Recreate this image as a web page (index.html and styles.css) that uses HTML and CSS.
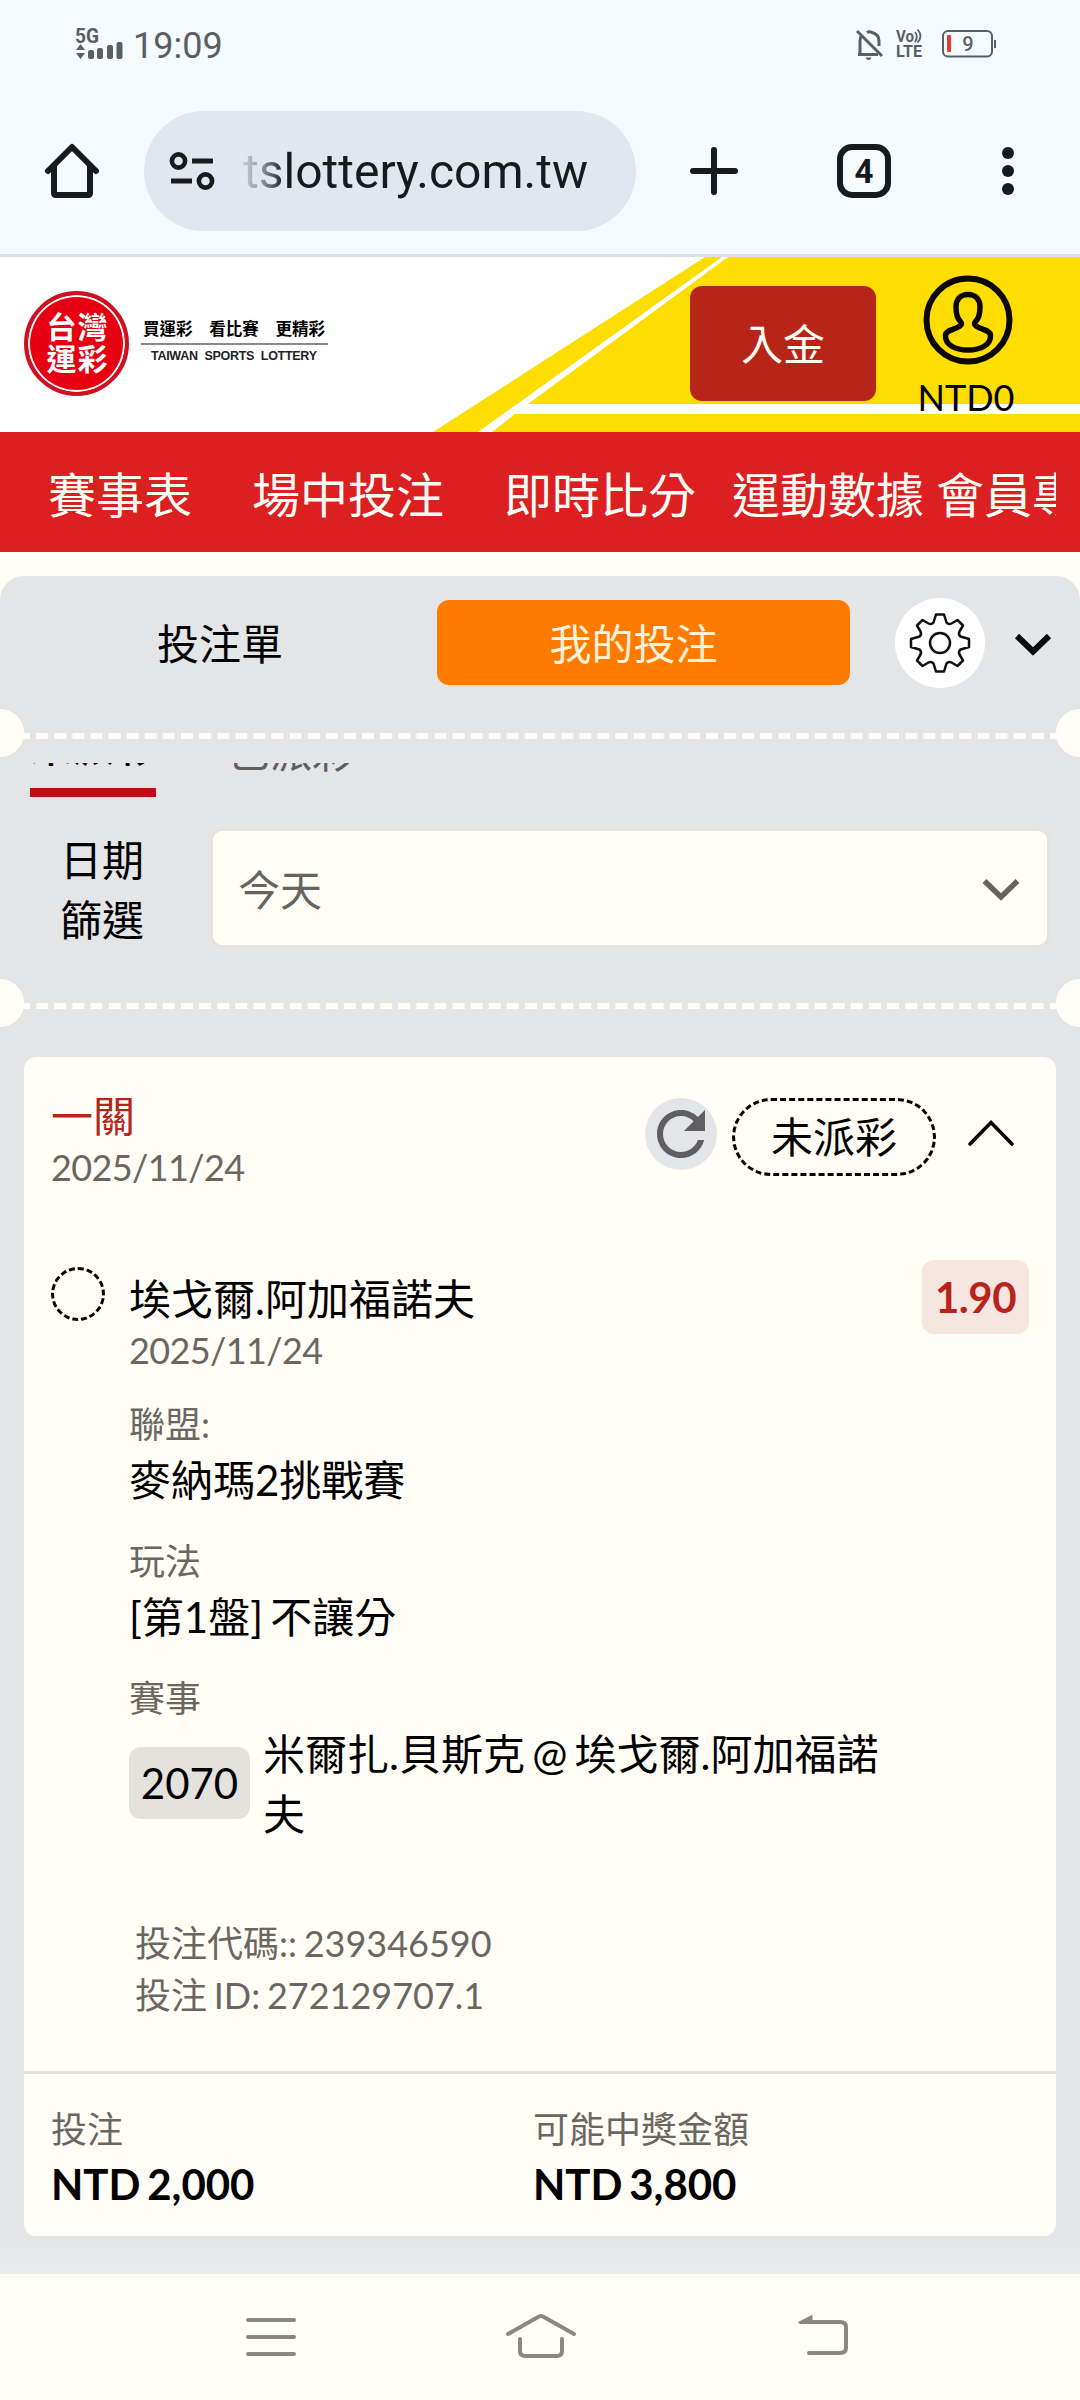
FILE: index.html
```html
<!DOCTYPE html>
<html lang="zh-Hant-TW">
<head>
<meta charset="utf-8">
<title>台灣運彩 - 我的投注</title>
<link rel="stylesheet" href="styles.css">
</head>
<body>
<header class="browser">
  <div class="status">
    <div class="status-left">
      <svg class="signal" width="50" height="34" viewBox="0 0 50 34">
        <text x="0" y="14.500" class="signal-label" textLength="24" lengthAdjust="spacingAndGlyphs">5G</text>
        <path d="M1 22 L5.500 16 L10 22Z M1 25 L10 25 L5.500 31Z"/>
        <rect x="13" y="22" width="6" height="9" rx="2"/><rect x="22" y="20" width="6" height="11" rx="2"/><rect x="32" y="17" width="6" height="14" rx="2"/><rect x="41.500" y="14" width="6" height="17" rx="2"/>
      </svg>
      <span class="clock">19:09</span>
    </div>
    <div class="status-right">
      <svg class="bell" width="30" height="32" viewBox="0 0 30 32" fill="none" stroke="#5c5f62" stroke-width="3">
        <path d="M2 3 L27 28 M3 26.500H23 M5 26.500V12.500Q5 9.500 6.500 8 M12 4.600Q14 3 17 4.500Q24 6.500 24 13V18"/><path d="M10.500 29.500h6q-1 2.500-3 2.500t-3-2.500z" fill="#5c5f62" stroke="none"/>
      </svg>
      <svg class="volte" width="28" height="32" viewBox="0 0 28 32">
        <text x="0" y="14" class="volte-label" textLength="18" lengthAdjust="spacingAndGlyphs">Vo</text>
        <text x="0" y="29" class="volte-label" textLength="26" lengthAdjust="spacingAndGlyphs">LTE</text>
        <path d="M19 4q3.500 4.500 0 10M21.500 1.500q6 6.500 0 13" fill="none" stroke="#5c5f62" stroke-width="1.800"/>
      </svg>
      <svg class="battery" width="56" height="30" viewBox="0 0 56 30">
        <rect x="1" y="2" width="49" height="25.500" rx="5" fill="none" stroke="#5c5f62" stroke-width="2"/><rect x="52" y="11" width="2" height="8"/><rect x="5" y="6" width="4" height="17" rx="1" fill="#e8392f"/>
        <text x="26" y="21.500" class="battery-label">9</text>
      </svg>
    </div>
  </div>
  <div class="toolbar">
    <svg class="home" width="60" height="60" viewBox="0 0 60 60" fill="none" stroke="#181b1e" stroke-width="6" stroke-linejoin="round" stroke-linecap="round"><path d="M6 30 L30 6 L54 30"/><path d="M12 25 V52 Q12 54 14 54 H46 Q48 54 48 52 V25"/></svg>
    <div class="omnibox">
      <svg width="48" height="42" viewBox="0 0 48 42" fill="none" stroke="#181b1e"><circle cx="10.500" cy="11" r="6.600" stroke-width="4.600"/><path d="M24 11h21M3 31h21" stroke-width="4.800"/><circle cx="37.500" cy="31" r="6.600" stroke-width="4.600"/></svg>
      <span class="url">tslottery.com.tw</span>
    </div>
    <svg class="plus" width="54" height="54" viewBox="0 0 54 54" stroke="#181b1e" stroke-width="6" stroke-linecap="round"><path d="M27 6V48M6 27H48"/></svg>
    <div class="tab-count">4</div>
    <svg class="dots" width="14" height="50" viewBox="0 0 14 50" fill="#181b1e"><circle cx="7" cy="7" r="6"/><circle cx="7" cy="25" r="6"/><circle cx="7" cy="43" r="6"/></svg>
  </div>
</header>

<section class="masthead">
  <svg class="masthead-art" width="1080" height="175" viewBox="0 257 1080 175"><path d="M705 257H1080V432H433Z" fill="#fedd00"/><path d="M722 257H728L528 404H1080V414H515L492 432H478Z" fill="#fff"/></svg>
  <div class="brand">
    <div class="seal"><span>台灣</span><span>運彩</span></div>
    <div class="slogan">
      <div class="slogan-zh"><span>買運彩</span><span>看比賽</span><span>更精彩</span></div>
      <div class="slogan-en">TAIWAN SPORTS LOTTERY</div>
    </div>
  </div>
  <div class="deposit">入金</div>
  <div class="account">
    <svg width="90" height="90" viewBox="0 0 90 90" fill="none" stroke="#0b0700"><circle cx="45" cy="45" r="41.500" stroke-width="6"/><path d="M45 19.500C37 19.500 33 25 33 32C33 39 34 43 37 46Q40 49 37 51C31 55 23 55 22.500 60C22 70 32 75 45 75C58 75 68 70 67.500 60C67 55 59 55 53 51Q50 49 53 46C56 43 57 39 57 32C57 25 53 19.500 45 19.500Z" stroke-width="5.500"/></svg>
    <span>NTD0</span>
  </div>
</section>

<nav class="menu"><div class="menu-items">
  <span class="m1">賽事表</span><span class="m2">場中投注</span><span class="m3">即時比分</span><span class="m4">運動數據</span><span>會員專區</span>
</div></nav>

<main class="panel">
  <div class="panel-head">
    <div class="slip">投注單</div>
    <div class="mine">我的投注</div>
    <div class="gear">
      <svg width="62" height="62" viewBox="-31 -31 62 62" fill="none" stroke="#111" stroke-width="2.500" stroke-linejoin="round"><circle r="10"/><path d="M-4 -28.500H4L6.500 -20.500Q8.500 -18 11.500 -19.500L17.500 -23L23 -17.500L19.500 -11.500Q18 -8.500 20.500 -6.500L29 -4V4L20.500 6.500Q18 8.500 19.500 11.500L23 17.500L17.500 23L11.500 19.500Q8.500 18 6.500 20.500L4 28.500H-4L-6.500 20.500Q-8.500 18 -11.500 19.500L-17.500 23L-23 17.500L-19.500 11.500Q-18 8.500 -20.500 6.500L-29 4V-4L-20.500 -6.500Q-18 -8.500 -19.500 -11.500L-23 -17.500L-17.500 -23L-11.500 -19.500Q-8.500 -18 -6.500 -20.500Z"/></svg>
    </div>
    <svg class="collapse" width="38" height="24" viewBox="0 0 38 24" fill="none" stroke="#0a0d0e" stroke-width="6"><path d="M3 3L19 18.500L35 3"/></svg>
  </div>
  <div class="perforation"></div>
  <div class="tabs"><span class="tab active">未派彩</span><span class="tab">已派彩</span></div>
  <div class="filter">
    <div class="filter-label">日期<br>篩選</div>
    <div class="select"><span>今天</span>
      <svg width="38" height="24" viewBox="0 0 38 24" fill="none" stroke="#666460" stroke-width="5.500"><path d="M2.500 3L19 19L35.500 3"/></svg>
    </div>
  </div>
  <div class="perforation"></div>

  <article class="card">
    <div class="card-head">
      <div class="card-title"><div class="legs">一關</div><div class="date">2025/11/24</div></div>
      <div class="refresh"><svg width="72" height="72" viewBox="0 0 24 24" fill="#5f5f60"><path d="M17.650 6.350C16.200 4.900 14.210 4 12 4c-4.420 0-7.990 3.580-7.990 8s3.570 8 7.990 8c3.730 0 6.840-2.550 7.730-6h-2.080c-.82 2.330-3.040 4-5.650 4-3.310 0-6-2.690-6-6s2.690-6 6-6c1.660 0 3.140.69 4.220 1.780L13 11h7V4l-2.350 2.350z"/></svg></div>
      <div class="state">未派彩</div>
      <svg class="caret" width="48" height="28" viewBox="0 0 48 28" fill="none" stroke="#000" stroke-width="3.600" stroke-linecap="round" stroke-linejoin="miter"><path d="M3 26L24 4.500L45 26"/></svg>
    </div>
    <div class="bet">
      <div class="ring"></div>
      <div class="details">
        <div class="value">埃戈爾.阿加福諾夫</div>
        <div class="date">2025/11/24</div>
        <div class="field"><div class="label">聯盟:</div><div class="value">麥納瑪2挑戰賽</div></div>
        <div class="field"><div class="label">玩法</div><div class="value">[第1盤] 不讓分</div></div>
        <div class="field"><div class="label">賽事</div><div class="match"><span class="code">2070</span><span class="value teams">米爾扎.貝斯克 @ 埃戈爾.阿加福諾夫</span></div></div>
      </div>
      <div class="odds">1.90</div>
    </div>
    <div class="ids"><div>投注代碼:: 239346590</div><div>投注 ID: 272129707.1</div></div>
    <div class="totals">
      <div><div class="label">投注</div><div class="amount">NTD 2,000</div></div>
      <div><div class="label">可能中獎金額</div><div class="amount">NTD 3,800</div></div>
    </div>
  </article>
</main>

<footer class="sysnav">
  <svg width="54" height="44" viewBox="0 0 54 44"><path d="M4 5H50M4 22H50M4 39H50"/></svg>
  <svg width="76" height="50" viewBox="0 0 76 50"><path d="M5 24L36 6.500Q38 5.500 40 6.500L71 24M17 29V41Q17 46 22 46H54Q59 46 59 41V29"/></svg>
  <svg width="54" height="44" viewBox="0 0 54 44"><path d="M9 7H42Q48 7 48 12V33Q48 38 42 38H11"/><path class="fill" d="M1 7L14 .500V8.500H2Z"/></svg>
</footer>
</body>
</html>
```
FILE: styles.css
```css
* { box-sizing: border-box; }

body {
  margin: 0;
  width: 1080px;
  height: 2400px;
  overflow: hidden;
  display: flex;
  flex-direction: column;
  background: #fffdf6;
  color: #000;
  font-family: Lato, "Noto Sans CJK TC", sans-serif;
  font-size: 42px;
  line-height: 60px;
  word-spacing: -3.5px;
}

svg { display: block; flex: none; overflow: visible; }

/* Browser chrome */
.browser {
  height: 257px;
  background: #f5fafe;
  border-bottom: 3px solid #dde1e4;
  font-family: Roboto, sans-serif;
}
.status {
  height: 88px;
  display: flex;
  justify-content: space-between;
  padding: 28px 82px 0 75px;
}
.status-left, .status-right { display: flex; align-items: flex-start; fill: #5c5f62; }
.signal-label { font: bold 20px Roboto, sans-serif; }
.clock { margin-left: 8px; font-size: 36px; line-height: 36px; color: #5c5f62; }
.bell { margin-right: 11px; }
.volte { margin-right: 18px; }
.volte-label { font: bold 16px Roboto, sans-serif; }
.battery { margin-top: 1px; }
.battery-label { font: 500 20px Roboto, sans-serif; text-anchor: middle; }
.toolbar {
  height: 166px;
  display: flex;
  align-items: center;
  padding: 0 65px 0 42px;
}
.omnibox {
  width: 492px;
  height: 120px;
  margin-left: 42px;
  padding-left: 24px;
  border-radius: 60px;
  background: #e2e7ef;
  display: flex;
  align-items: center;
}
.url {
  margin: 2px 0 0 27px;
  font-size: 48px;
  background: linear-gradient(90deg, #c8ccd3 0, #8b9098 20px, #181b1e 42px);
  background-clip: text;
  color: transparent;
}
.plus { margin-left: 51px; }
.tab-count {
  width: 54px;
  height: 54px;
  margin-left: 96px;
  border: 6px solid #181b1e;
  border-radius: 15px;
  font-size: 33px;
  font-weight: 700;
  line-height: 43px;
  text-align: center;
  color: #181b1e;
}
.dots { margin-left: auto; }

/* Site masthead */
.masthead {
  position: relative;
  height: 175px;
  background: #fff;
  display: flex;
  align-items: flex-start;
  padding-left: 24px;
}
.masthead-art { position: absolute; inset: 0; }
.brand { position: relative; width: 666px; display: flex; margin-top: 34px; }
.seal {
  width: 105px;
  height: 105px;
  padding: 15px 0 0 2px;
  border: 4px solid #cf1020;
  border-radius: 50%;
  background: #e60012;
  box-shadow: inset 0 0 0 2px #fff;
  color: #fff;
  font-size: 30px;
  font-weight: 700;
  line-height: 32px;
  letter-spacing: 1px;
  text-align: center;
}
.seal span { display: block; }
.slogan { width: 187px; margin: 27px 0 0 12px; }
.slogan-zh {
  height: 27px;
  display: flex;
  justify-content: space-between;
  padding: 0 3px 0 2px;
  border-bottom: 2px solid #8a8a8a;
  font-size: 16.500px;
  font-weight: 700;
  line-height: 22px;
}
.slogan-en {
  padding-left: 10px;
  font: bold 12.500px/22px "Liberation Sans", sans-serif;
  color: #222;
  word-spacing: 3.5px;
  letter-spacing: -0.28px;
  white-space: nowrap;
}
.deposit {
  position: relative;
  width: 186px;
  height: 115px;
  margin-top: 29px;
  border-radius: 12px;
  background: #b72519;
  color: #fffdf6;
  text-align: center;
  line-height: 117px;
}
.account {
  position: relative;
  width: 110px;
  margin: 18px 0 0 37px;
  display: flex;
  flex-direction: column;
  align-items: center;
  font-size: 36px;
  line-height: 60px;
}
.account span { margin: 2px 4px 0 0; }

.menu { height: 120px; padding: 0 24px; background: #dc1f20; color: #fffdf6; font-size: 48px; line-height: 126px; }
.menu-items { display: flex; padding-left: 24px; overflow: hidden; white-space: nowrap; height: 120px; }
.m1 { margin-right: 60px; }
.m2 { margin-right: 60px; }
.m3 { margin-right: 36px; }
.m4 { margin-right: 12px; }

/* Bet panel */
.panel {
  flex: 1;
  margin-top: 24px;
  background: linear-gradient(#e4e5e7 1660px, #e9eaeb);
  border-radius: 24px 24px 0 0;
}
.panel-head { height: 133px; display: flex; align-items: flex-start; padding: 22px 28px 0 0; }
.slip { width: 437px; padding: 16px 0 0 3px; text-align: center; }
.mine {
  width: 413px;
  height: 85px;
  margin-top: 2px;
  padding-right: 20px;
  border-radius: 12px;
  background: #ff7b00;
  color: #fff3dc;
  text-align: center;
  line-height: 88px;
}
.gear {
  width: 90px;
  height: 90px;
  margin-left: 45px;
  border-radius: 50%;
  background: #fff;
  display: flex;
  align-items: center;
  justify-content: center;
}
.collapse { margin: 35px 0 0 auto; }

.perforation { position: relative; height: 48px; overflow: hidden; padding-top: 24px; }
.perforation::before { content: ""; display: block; border-top: 6px dashed #fffdf6; }
.perforation::after {
  content: "";
  position: absolute;
  inset: 0;
  background:
    radial-gradient(circle at 0 24px, #fffdf6 23.500px, transparent 24.500px),
    radial-gradient(circle at 1080px 24px, #fffdf6 23.500px, transparent 24.500px);
}

.tabs {
  height: 34px;
  margin-top: 6px;
  padding-left: 30px;
  display: flex;
  align-items: flex-end;
  gap: 72px;
  overflow: hidden;
}
.tab { flex: none; padding-bottom: 15px; color: #5f5f60; }
.tab.active { padding-bottom: 12px; border-bottom: 9px solid #bb0f14; color: #000; font-weight: 500; }

.filter { display: flex; height: 182px; padding: 34px 33px 0 60px; }
.filter-label { width: 153px; margin-top: -1px; }
.select {
  flex: 1;
  height: 114px;
  border-radius: 9px;
  background: #fffdf6;
  box-shadow: 0 0 0 3px #e3e2dd;
  color: #666460;
  display: flex;
  align-items: center;
  justify-content: space-between;
  padding: 3px 27px 0 25px;
}

/* Bet card */
.card { height: 1179px; margin: 30px 24px 0; border-radius: 12px; background: #fffdf6; }
.card-head { display: flex; height: 203px; padding: 30px 41px 0 27px; }
.card-title { width: 594px; }
.legs { height: 60px; line-height: 58px; color: #b8241c; }
.date { font-size: 36px; line-height: 42px; letter-spacing: -0.6px; color: #6a6762; }
.legs + .date { line-height: 40px; }
.refresh { width: 72px; height: 72px; margin-top: 11px; border-radius: 50%; background: #e4e5e8; }
.state {
  width: 204px;
  height: 78px;
  margin: 11px 0 0 15px;
  border: 3px dashed #000;
  border-radius: 39px;
  text-align: center;
  line-height: 73px;
}
.caret { margin: 31px 0 0 auto; }

.bet { display: flex; padding: 0 27px; }
.ring { width: 54px; height: 54px; margin-top: 7px; border: 3px dashed #000; border-radius: 50%; }
.details { flex: 1; padding: 9px 0 0 24px; }
.odds {
  width: 107px;
  height: 74px;
  border-radius: 12px;
  background: #f6e6e0;
  color: #b8241c;
  font-weight: 700;
  line-height: 75px;
  letter-spacing: -0.5px;
  text-align: center;
}
.field { margin-top: 25px; }
.date + .field { margin-top: 27px; }
.label { font-size: 36px; line-height: 52px; color: #6a6762; }
.match { display: flex; align-items: center; }
.code {
  width: 121px;
  height: 72px;
  margin: -2px 13px 0 0;
  border-radius: 12px;
  background: #e4e2dd;
  line-height: 72px;
  text-align: center;
}
.teams { width: 640px; }
.ids { height: 227px; padding: 73px 112px 0 111px; font-size: 36px; line-height: 52px; word-spacing: -2.5px; color: #6a6762; }
.totals { display: grid; grid-template-columns: 482px 1fr; padding: 29px 27px 0; border-top: 3px solid #e3e2dd; }
.amount { font-weight: 700; line-height: 58px; }

/* System navigation */
.sysnav { height: 126px; display: flex; align-items: flex-start; padding: 41px 0 0 244px; }
.sysnav svg { fill: none; stroke: #8a8883; stroke-width: 4; stroke-linecap: round; }
.sysnav .fill { fill: #8a8883; stroke-width: 1; }
.sysnav svg:nth-child(2) { margin: -5px 219px 0 204.5px; }
```
